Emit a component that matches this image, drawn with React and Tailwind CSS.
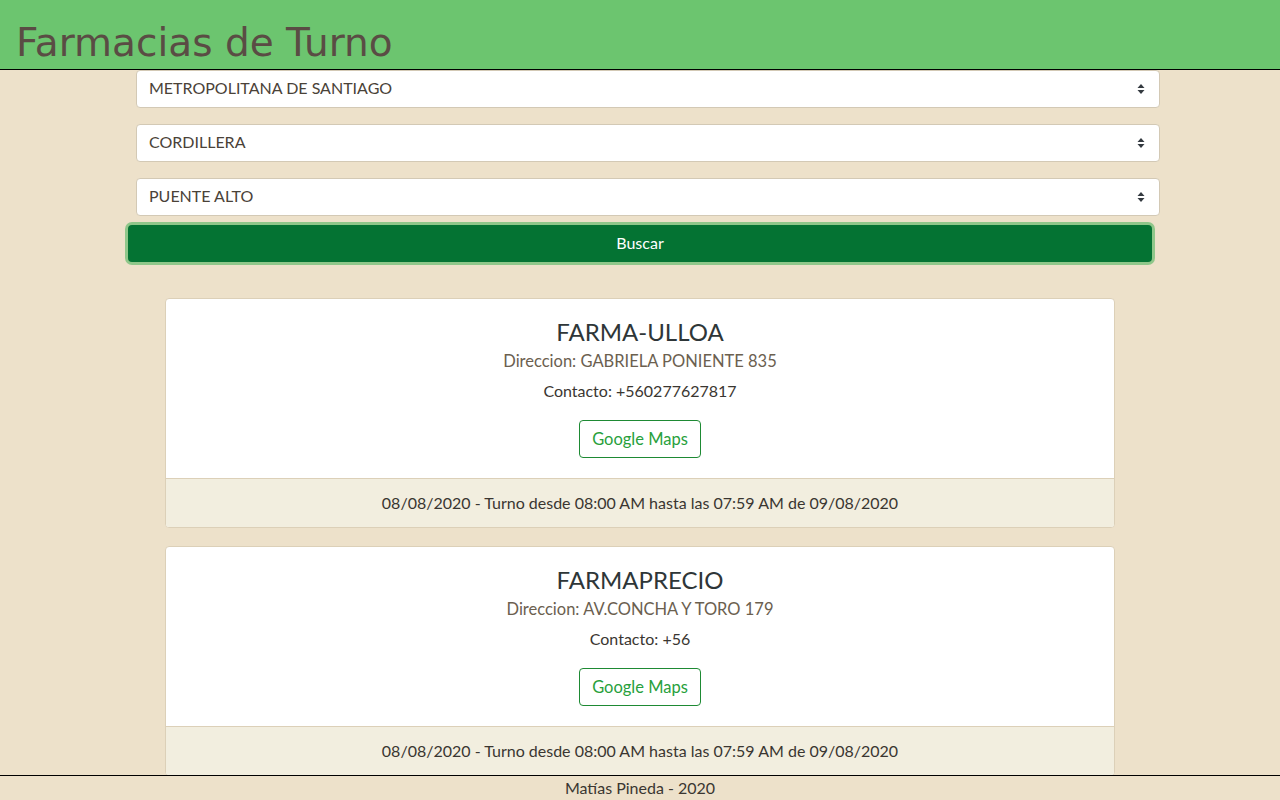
import React from "react";

const farmacias = [
  {
    nombre: "FARMA-ULLOA",
    direccion: "GABRIELA PONIENTE 835",
    contacto: "+560277627817",
  },
  {
    nombre: "FARMAPRECIO",
    direccion: "AV.CONCHA Y TORO 179",
    contacto: "+56",
  },
];

const turno = "08/08/2020 - Turno desde 08:00 AM hasta las 07:59 AM de 09/08/2020";

function SelectBox({ value }) {
  return (
    <div className="relative ml-2 flex h-[38px] w-[1024px] items-center rounded-[4px] border border-[#d3c9b5] bg-white pb-[2px] pl-[12px] text-[16px] text-[#4a4238]">
      {value}
      <svg
        className="absolute right-[14px] top-1/2 -translate-y-1/2"
        width="8"
        height="12"
        viewBox="0 0 8 12"
      >
        <path d="M4 1 L7.5 5 H0.5 Z" fill="#343a40" />
        <path d="M4 11 L7.5 7 H0.5 Z" fill="#343a40" />
      </svg>
    </div>
  );
}

const App = () => {
  return (
    <div
      className="h-screen overflow-hidden bg-[#ede1ca]"
      style={{ fontFamily: "Lato, 'Open Sans', sans-serif" }}
    >
      <header className="h-[70px] border-b border-black bg-[#6cc56f] px-[16px] pt-[19px]">
        <h1
          className="text-[39px] leading-[48px] text-[#5a4c44]"
          style={{ fontFamily: "'DejaVu Sans', Verdana, sans-serif" }}
        >
          Farmacias de Turno
        </h1>
      </header>

      <div className="mx-auto flex w-[1024px] flex-col">
        <div className="flex flex-col gap-[16px]">
          <SelectBox value="METROPOLITANA DE SANTIAGO" />
          <SelectBox value="CORDILLERA" />
          <SelectBox value="PUENTE ALTO" />
        </div>
        <button className="mt-[9px] h-[37px] w-[1024px] rounded-[4px] bg-[#047333] pb-[2px] text-[16px] text-white ring-[3px] ring-[#8fc78a]">
          Buscar
        </button>
      </div>

      <div className="mx-auto mt-[36px] flex w-[950px] flex-col gap-[18px]">
        {farmacias.map((f) => (
          <div
            key={f.nombre}
            className="overflow-hidden rounded-[4px] border border-[#dcd0b8] bg-white text-center"
          >
            <div className="px-5 pb-[20px] pt-[18px]">
              <h2 className="text-[24px] leading-[29px] text-[#2e3638]">
                {f.nombre}
              </h2>
              <p className="mt-[3px] text-[16.5px] leading-[24px] text-[#6b604f]">
                Direccion: {f.direccion}
              </p>
              <p className="mt-[6px] text-[16px] leading-[24px] text-[#3a3631]">
                Contacto: {f.contacto}
              </p>
              <button className="mt-[17px] h-[38px] rounded-[4px] border border-[#1e8a34] px-[12px] text-[16.5px] text-[#28a03c]">
                Google Maps
              </button>
            </div>
            <div className="border-t border-[#dcd0b8] bg-[#f2eedf] py-[12px] text-[16px] leading-[24px] text-[#3a3631]">
              {turno}
            </div>
          </div>
        ))}
      </div>

      <footer className="fixed bottom-0 left-0 right-0 h-[25px] border-t border-black bg-[#ede1ca] text-center text-[16px] leading-[24px] text-[#3a3631]">
        Matías Pineda - 2020
      </footer>
    </div>
  );
};

export default App;
